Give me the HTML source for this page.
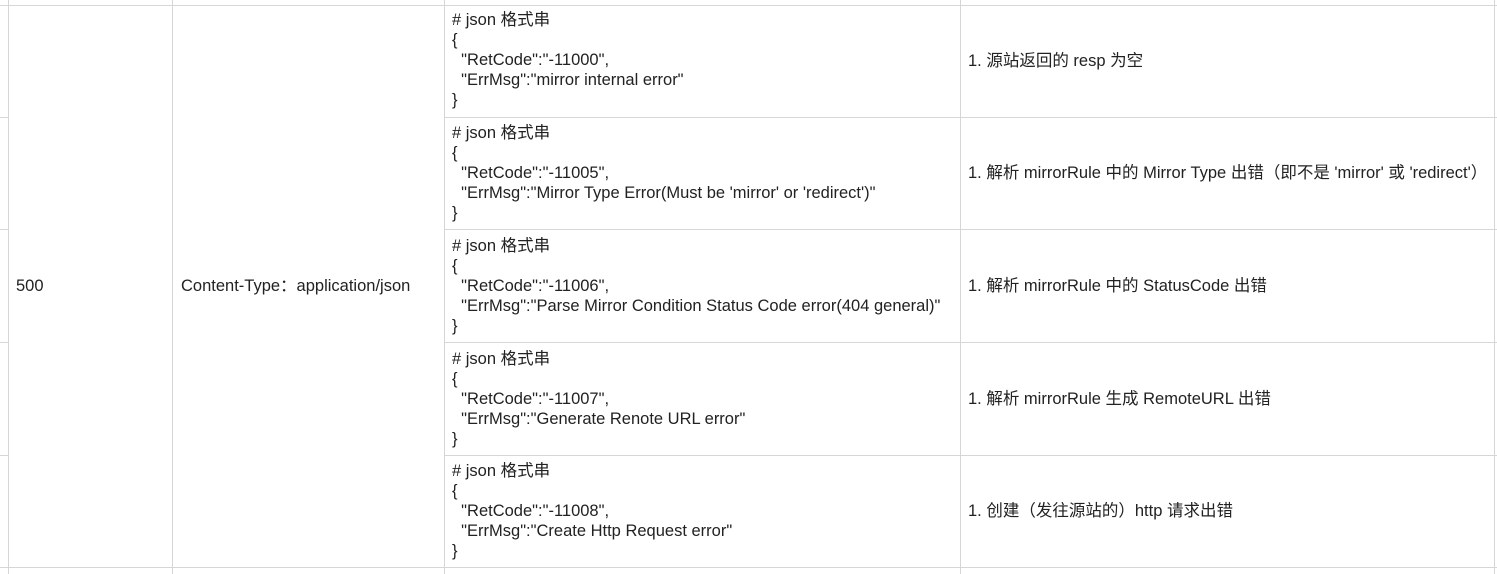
<!DOCTYPE html>
<html><head><meta charset="utf-8"><style>
html,body{margin:0;padding:0;background:#fff;width:1497px;height:574px;overflow:hidden}
body{position:relative;font-family:"Liberation Sans","Noto Sans CJK SC",sans-serif;font-size:16.5px;color:#222}
.h{position:absolute;height:1px;background:#d6d6d6}
.v{position:absolute;width:1px;background:#d6d6d6}
.t{position:absolute;white-space:pre;line-height:20px}
</style></head><body>
<div class="h" style="left:0;top:5px;width:1497px"></div>
<div class="h" style="left:0;top:567px;width:1497px"></div>
<div class="h" style="left:0;top:117px;width:8px"></div>
<div class="h" style="left:0;top:229px;width:8px"></div>
<div class="h" style="left:0;top:342px;width:8px"></div>
<div class="h" style="left:0;top:455px;width:8px"></div>
<div class="h" style="left:444px;top:117px;width:1053px"></div>
<div class="h" style="left:444px;top:229px;width:1053px"></div>
<div class="h" style="left:444px;top:342px;width:1053px"></div>
<div class="h" style="left:444px;top:455px;width:1053px"></div>
<div class="v" style="left:8px;top:0;height:574px"></div>
<div class="v" style="left:172px;top:0;height:574px"></div>
<div class="v" style="left:444px;top:0;height:574px"></div>
<div class="v" style="left:960px;top:0;height:574px"></div>
<div class="v" style="left:1494px;top:0;height:574px"></div>

<div class="t" style="left:16px;top:276px">500</div>
<div class="t" style="left:181px;top:276px">Content-Type：application/json</div>

<div class="t" style="left:452px;top:10px"># json 格式串
{
  "RetCode":"-11000",
  "ErrMsg":"mirror internal error"
}</div>
<div class="t" style="left:452px;top:123px"># json 格式串
{
  "RetCode":"-11005",
  "ErrMsg":"Mirror Type Error(Must be 'mirror' or 'redirect')"
}</div>
<div class="t" style="left:452px;top:236px"># json 格式串
{
  "RetCode":"-11006",
  "ErrMsg":"Parse Mirror Condition Status Code error(404 general)"
}</div>
<div class="t" style="left:452px;top:349px"># json 格式串
{
  "RetCode":"-11007",
  "ErrMsg":"Generate Renote URL error"
}</div>
<div class="t" style="left:452px;top:461px"># json 格式串
{
  "RetCode":"-11008",
  "ErrMsg":"Create Http Request error"
}</div>

<div class="t" style="left:968px;top:51px">1. 源站返回的 resp 为空</div>
<div class="t" style="left:968px;top:163px">1. 解析 mirrorRule 中的 Mirror Type 出错（即不是 'mirror' 或 'redirect'）</div>
<div class="t" style="left:968px;top:276px">1. 解析 mirrorRule 中的 StatusCode 出错</div>
<div class="t" style="left:968px;top:389px">1. 解析 mirrorRule 生成 RemoteURL 出错</div>
<div class="t" style="left:968px;top:501px">1. 创建（发往源站的）http 请求出错</div>
</body></html>
